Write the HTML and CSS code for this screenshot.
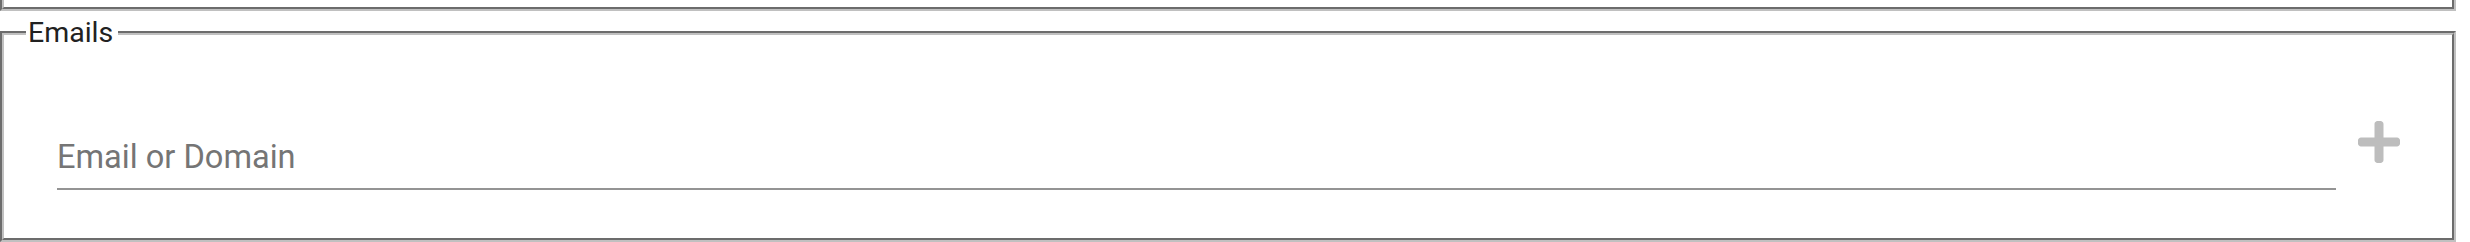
FILE: index.html
```html
<!DOCTYPE html>
<html lang="en">
<head>
<meta charset="utf-8">
<title>Emails</title>
<link rel="stylesheet" href="styles.css">
</head>
<body>
<div class="page">
  <div class="prev-box"></div>
  <fieldset class="emails">
    <legend class="emails-legend">Emails</legend>
    <div class="row">
      <input class="email-input" type="text" placeholder="Email or Domain">
      <button class="add-btn" type="button" aria-label="Add">
        <svg class="add-icon" viewBox="0 0 448 512" width="42" height="48" aria-hidden="true"><path d="M416 208H272V64c0-17.67-14.33-32-32-32h-32c-17.67 0-32 14.33-32 32v144H32c-17.67 0-32 14.33-32 32v32c0 17.67 14.33 32 32 32h144v144c0 17.67 14.33 32 32 32h32c17.67 0 32-14.33 32-32V304h144c17.67 0 32-14.33 32-32v-32c0-17.67-14.33-32-32-32z"/></svg>
      </button>
    </div>
  </fieldset>
</div>
</body>
</html>
```

FILE: styles.css
```css
html, body {
  margin: 0;
  padding: 0;
  background: #ffffff;
}

body {
  font-family: Roboto, "Noto Sans", "Liberation Sans", sans-serif;
  overflow: hidden;
}

.page {
  width: 2456px;
}

.prev-box {
  height: 7px;
  border: 4px groove #c0c0c0;
  border-top: none;
}

.emails {
  box-sizing: border-box;
  margin: 5px 0 0 0;
  height: 226px;
  min-width: 0;
  padding: 0 22px;
  border: 4px groove #c0c0c0;
}

.emails-legend {
  padding: 0 5px 0 2px;
  font-size: 28.5px;
  line-height: normal;
  color: #212121;
}

.row {
  display: flex;
  align-items: flex-start;
  padding-top: 89px;
  padding-left: 31px;
}

.email-input {
  box-sizing: content-box;
  width: 2279px;
  height: 38px;
  margin: 0;
  padding: 0 0 12px 0;
  border: none;
  border-bottom: 2px solid #949494;
  outline: none;
  background: transparent;
  font-family: Roboto, "Noto Sans", "Liberation Sans", sans-serif;
  font-size: 32.6px;
  color: #212121;
}

.email-input::placeholder {
  color: #757575;
  opacity: 1;
}

.add-btn {
  display: flex;
  margin: -20px 0 0 22px;
  padding: 0;
  border: none;
  background: transparent;
}

.add-icon {
  display: block;
  fill: #bdbdbd;
}
```
